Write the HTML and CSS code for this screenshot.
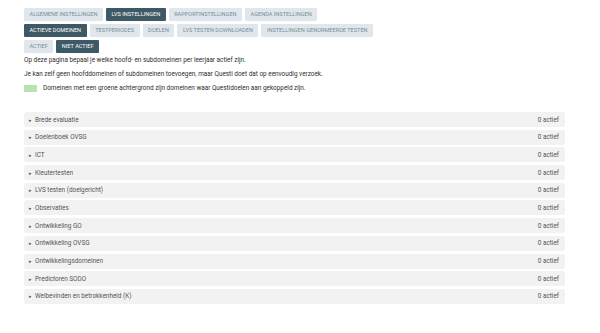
FILE: index.html
```html
<!DOCTYPE html>
<html lang="nl">
<head>
    <meta charset="UTF-8">
    <title>LVS instellingen</title>
    <link rel="stylesheet" href="styles.css">
</head>
<body>
    <div class="page">
        <div class="tabs">
            <button class="tab">Algemene instellingen</button>
            <button class="tab active">LVS instellingen</button>
            <button class="tab">Rapportinstellingen</button>
            <button class="tab">Agenda instellingen</button>
        </div>
        <div class="tabs">
            <button class="tab active">Actieve domeinen</button>
            <button class="tab">Testperiodes</button>
            <button class="tab">Doelen</button>
            <button class="tab">LVS testen downloaden</button>
            <button class="tab">Instellingen genormeerde testen</button>
        </div>
        <div class="tabs">
            <button class="tab">Actief</button>
            <button class="tab active">Niet actief</button>
        </div>

        <p class="info">Op deze pagina bepaal je welke hoofd- en subdomeinen per leerjaar actief zijn.</p>
        <p class="info">Je kan zelf geen hoofddomeinen of subdomeinen toevoegen, maar Questi doet dat op eenvoudig verzoek.</p>
        <div class="legend">
            <span class="swatch"></span>
            <span>Domeinen met een groene achtergrond zijn domeinen waar Questidoelen aan gekoppeld zijn.</span>
        </div>

        <div class="domains">
            <div class="domain"><span class="name">Brede evaluatie</span><span class="count">0 actief</span></div>
            <div class="domain"><span class="name">Doelenboek OVSG</span><span class="count">0 actief</span></div>
            <div class="domain"><span class="name">ICT</span><span class="count">0 actief</span></div>
            <div class="domain"><span class="name">Kleutertesten</span><span class="count">0 actief</span></div>
            <div class="domain"><span class="name">LVS testen (doelgericht)</span><span class="count">0 actief</span></div>
            <div class="domain"><span class="name">Observaties</span><span class="count">0 actief</span></div>
            <div class="domain"><span class="name">Ontwikkeling GO</span><span class="count">0 actief</span></div>
            <div class="domain"><span class="name">Ontwikkeling OVSG</span><span class="count">0 actief</span></div>
            <div class="domain"><span class="name">Ontwikkelingsdomeinen</span><span class="count">0 actief</span></div>
            <div class="domain"><span class="name">Predictoren SODO</span><span class="count">0 actief</span></div>
            <div class="domain"><span class="name">Welbevinden en betrokkenheid (K)</span><span class="count">0 actief</span></div>
        </div>
    </div>
</body>
</html>
```

FILE: styles.css
```css
body {
    font-family: Roboto, "Liberation Sans", sans-serif;
    margin: 0;
    background-color: #ffffff;
    color: #2e2e2e;
}
.page {
    padding: 8px 35px 0 24px;
}
.tabs {
    display: flex;
    gap: 3px;
    margin-bottom: 3px;
}
.tab {
    font-family: inherit;
    font-size: 5.6px;
    text-transform: uppercase;
    background-color: #dfe7ec;
    color: #7a8c96;
    border: none;
    border-radius: 1px;
    height: 13px;
    padding: 0 5.5px;
    line-height: 13px;
}
.tab.active {
    background-color: #3d5966;
    color: #ffffff;
}
.info {
    font-size: 6.4px;
    margin: 2px 0 6px;
    line-height: 8px;
}
.legend {
    display: flex;
    align-items: center;
    gap: 6px;
    font-size: 6.4px;
    margin-top: 2px;
}
.swatch {
    display: inline-block;
    width: 13px;
    height: 7px;
    background-color: #b7e3b1;
}
.domains {
    margin-top: 20px;
    display: flex;
    flex-direction: column;
    gap: 2.7px;
}
.domain {
    display: flex;
    justify-content: space-between;
    align-items: center;
    height: 15px;
    padding: 0 6px 0 5px;
    background-color: #f2f2f2;
    border-radius: 2px;
    font-size: 6.4px;
    color: #555555;
}
.name::before {
    content: "\25B8";
    font-size: 5px;
    margin-right: 3px;
}
```
